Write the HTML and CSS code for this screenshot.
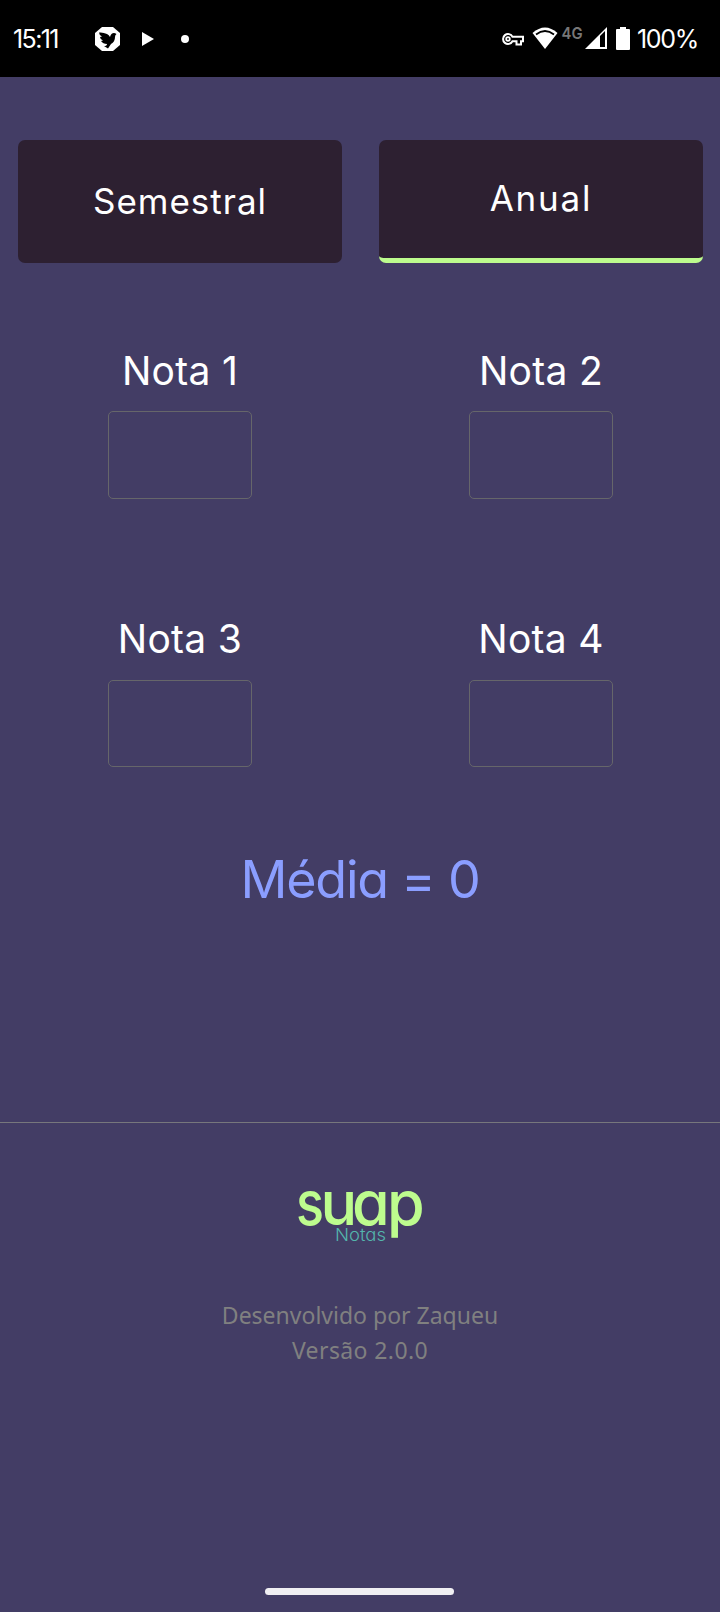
FILE: index.html
```html
<!DOCTYPE html>
<html lang="pt-BR">
<head>
<meta charset="utf-8">
<title>SUAP Notas</title>
<link rel="stylesheet" href="styles.css">
</head>
<body>
<header class="status">
  <span class="clock">15:11</span>
  <svg class="notifications" width="96" height="26" viewBox="0 0 96 26">
    <path fill="#fff" d="M7 1h11l7 6v12l-7 6H7l-7-6V7z"/>
    <path fill="#000" d="M4 6.500Q8 6 12 8Q14 9 15 11Q16 7 19 7Q20 7 21.500 8Q20 9 20 11Q20 16 16 18Q14 21 13 22.500L9 20Q12 20 12 18Q8 18 6 15L8 14.500Q5 13 5 11L7 10.500Q4 9 4 6.500z"/>
    <path fill="#fff" d="M47 6l12 7-12 7z"/>
    <circle cx="90" cy="13" r="4" fill="#fff"/>
  </svg>
  <div class="system">
    <svg class="indicators" width="129" height="26" viewBox="0 0 129 26">
      <path fill="none" stroke="#fff" stroke-width="2" d="M10.500 10.700a5 5 0 1 0 0 4.600h4v3.200h4.500v-3.200h2v-4.600z"/>
      <circle cx="6" cy="13" r="1.800" fill="none" stroke="#fff" stroke-width="1.800"/>
      <path fill="#fff" d="M30.500 7Q43-4 55.500 7L43 23z"/>
      <path fill="none" stroke="#000" stroke-width="1.800" d="M34 8.500Q43 1.500 52 8.500"/>
      <text class="network" x="59.500" y="13" textLength="21" lengthAdjust="spacingAndGlyphs">4G</text>
      <path fill="#fff" d="M83 23L105 1v22z"/>
      <path fill="#000" d="M98 10l5-5v16h-5z"/>
      <path fill="#fff" d="M118 1h6v2h3q1 0 1 1v19q0 1-1 1h-12q-1 0-1-1V4q0-1 1-1h3z"/>
    </svg>
    <span class="charge">100%</span>
  </div>
</header>
<main>
  <nav class="tabs">
    <button class="tab">Semestral</button>
    <button class="tab active">Anual</button>
  </nav>
  <section class="grades">
    <label class="grade">Nota 1<input class="field"></label>
    <label class="grade right">Nota 2<input class="field"></label>
    <label class="grade lower">Nota 3<input class="field"></label>
    <label class="grade lower right">Nota 4<input class="field"></label>
  </section>
  <p class="average">Média = 0</p>
</main>
<footer class="footer">
  <svg class="logo" width="130" height="54" viewBox="0 0 130 54">
    <text class="logo-name" y="37"><tspan x="1" textLength="28" lengthAdjust="spacingAndGlyphs">s</tspan><tspan x="25.500">u</tspan><tspan x="57">a</tspan><tspan x="92">p</tspan></text>
    <text class="logo-sub" x="40" y="52.500" textLength="51" lengthAdjust="spacingAndGlyphs">Notas</text>
  </svg>
  <p class="credit"><span class="author">Desenvolvido por Zaqueu</span><br><span class="version">Versão 2.0.0</span></p>
  <div class="handle"></div>
</footer>
</body>
</html>
```
FILE: styles.css
```css
* { box-sizing: border-box; }
body {
  margin: 0;
  width: 720px;
  height: 1612px;
  overflow: hidden;
  display: flex;
  flex-direction: column;
  background: #433d65;
  color: #fff;
  font-family: Inter, "Liberation Sans", sans-serif;
}
p { margin: 0; }
.status {
  display: flex;
  align-items: center;
  height: 77px;
  padding: 0 21px 0 13px;
  background: #000;
}
.clock { width: 82px; font-size: 25px; letter-spacing: -1.6px; }
.system { display: flex; align-items: center; gap: 6px; margin-left: auto; }
.network { font-size: 16px; font-weight: 600; fill: #777; }
.charge { width: 62px; font-size: 25px; letter-spacing: -1.3px; white-space: nowrap; }
.tabs {
  display: flex;
  gap: 37px;
  padding: 63px 17px 0 18px;
}
.tab {
  flex: 1;
  height: 123px;
  padding: 0 0 2px;
  border: 0;
  border-radius: 7px;
  background: #2d2031;
  color: #fff;
  font: 400 35px Inter, sans-serif;
  letter-spacing: 1px;
}
.active { border-bottom: 5px solid #bdfc8e; letter-spacing: 1.8px; }
.grades {
  display: grid;
  grid-template-columns: 360px 360px;
  margin-top: 82px;
}
.grade {
  display: flex;
  flex-direction: column;
  align-items: center;
  height: 268px;
  font-size: 39px;
  font-weight: 400;
  letter-spacing: .3px;
  line-height: 51px;
}
.right { padding-left: 2px; }
.field {
  width: 144px;
  height: 88px;
  margin-top: 15px;
  border: 1px solid #66666a;
  border-radius: 5px;
  background: transparent;
}
.lower .field { height: 87px; margin-top: 16px; }
.average {
  margin-top: -31px;
  line-height: 60px;
  font-size: 52px;
  font-weight: 400;
  letter-spacing: -1.2px;
  text-align: center;
  color: #8b9eff;
  font-feature-settings: "cv11";
}
.footer {
  display: flex;
  flex-direction: column;
  align-items: center;
  margin-top: auto;
  height: 490px;
  padding: 65px 0 17px;
  border-top: 1px solid #77777c;
}
.logo { overflow: visible; }
.logo-name { font-size: 61px; font-weight: 500; fill: #bdfc8e; font-feature-settings: "cv11"; }
.logo-sub { font-size: 17px; font-weight: 300; fill: #54b5ac; font-feature-settings: "cv11"; }
.credit {
  margin-top: 56px;
  font: 23px/35px "Noto Sans", sans-serif;
  text-align: center;
  color: #808080;
}
.version { letter-spacing: .4px; }
.handle {
  width: 189px;
  height: 7px;
  margin-top: auto;
  margin-right: 2px;
  border-radius: 4px;
  background: #f0eff2;
}
```
